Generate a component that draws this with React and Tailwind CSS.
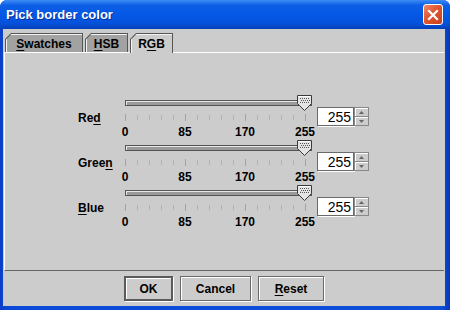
import React from "react";

const rows = [
  { name: "Red", key: "d", idx: 2 },
  { name: "Green", key: "n", idx: 4 },
  { name: "Blue", key: "B", idx: 0 },
];

function Mnemonic({ text, idx }) {
  return (
    <>
      {text.slice(0, idx)}
      <span className="underline underline-offset-2">{text[idx]}</span>
      {text.slice(idx + 1)}
    </>
  );
}

function Thumb() {
  const dots = [];
  for (let y = 3; y <= 8; y += 2) {
    for (let x = 3; x <= 12; x += 2) {
      dots.push(<rect key={`${x}-${y}`} x={x + ((y - 3) / 2) % 2} y={y} width="1" height="1" fill="#555" />);
    }
  }
  return (
    <svg width="15" height="16" viewBox="0 0 15 16">
      <path d="M0.5 0.5 H14.5 V8.5 L7.5 15.5 L0.5 8.5 Z" fill="#e4e4e4" stroke="#3a3a3a" />
      <path d="M1.5 1.5 H13.5" stroke="#fff" />
      {dots}
    </svg>
  );
}

function Spinner() {
  return (
    <div className="flex mt-[12px] h-[19px]">
      <div className="w-[37px] h-full bg-white border border-[#6a6a6a] shadow-[1px_1px_0_#fff] flex items-center justify-end pr-[2px] text-[14px] text-black leading-none">
        255
      </div>
      <div className="flex flex-col w-[15px] h-full">
        <div className="flex-1 bg-[#cccccc] border border-[#888] border-b-0 shadow-[inset_1px_1px_0_#fff] flex items-center justify-center">
          <svg width="5" height="3" viewBox="0 0 5 3"><path d="M2.5 0 L5 3 H0 Z" fill="#666" /></svg>
        </div>
        <div className="flex-1 bg-[#cccccc] border border-[#888] shadow-[inset_1px_1px_0_#fff] flex items-center justify-center">
          <svg width="5" height="3" viewBox="0 0 5 3"><path d="M0 0 H5 L2.5 3 Z" fill="#666" /></svg>
        </div>
      </div>
    </div>
  );
}

function SliderRow({ row }) {
  const ticks = Array.from({ length: 16 }, (_, i) => i);
  return (
    <div className="flex h-[45px]">
      <div className="w-[117px] pl-[73px] pt-[16px] text-[12px] font-bold leading-[14px] text-black">
        <Mnemonic text={row.name} idx={row.idx} />
      </div>
      <div className="relative w-[191px] h-full">
        <div className="pt-[5px] pl-[3px]">
          <div className="w-[187px] h-[6px] border border-[#555] bg-[#9a9a9a] shadow-[inset_1px_1px_0_#e8e8e8]" />
        </div>
        <div className="flex justify-between items-start w-[181px] ml-[3px] mt-[8px] h-[7px]">
          {ticks.map((i) => (
            <div
              key={i}
              className={i % 5 === 0 ? "w-px h-[7px] bg-[#a0a0bc]" : "w-px h-[5px] mt-[1px] bg-[#b0b0c4]"}
            />
          ))}
        </div>
        <div className="flex justify-between w-[220px] -ml-[17px] mt-[4px] text-[12px] font-bold leading-[14px] text-black">
          {["0", "85", "170", "255"].map((n) => (
            <div key={n} className="w-[40px] text-center">{n}</div>
          ))}
        </div>
        <div className="absolute left-[175px] top-0">
          <Thumb />
        </div>
      </div>
      <div className="ml-[4px]">
        <Spinner />
      </div>
    </div>
  );
}

function Tab({ label, idx, width, selected }) {
  return (
    <div
      className={`${width} ${selected ? "h-[20px] -mb-px z-10" : "h-[19px]"} relative bg-[#555] pt-px px-px [clip-path:polygon(6px_0,100%_0,100%_100%,0_100%,0_6px)]`}
    >
      <div
        className={`h-full ${selected ? "bg-[#cccccc]" : "bg-[#a2a2a2]"} shadow-[inset_1px_1px_0_#f4f4f4] [clip-path:polygon(5.5px_0,100%_0,100%_100%,0_100%,0_5.5px)] flex items-center justify-center text-[12px] font-bold leading-none text-black pt-px`}
      >
        <Mnemonic text={label} idx={idx} />
      </div>
    </div>
  );
}

function Button({ label, idx, width, isDefault }) {
  return (
    <button
      className={`${width} h-[25px] bg-[#cccccc] ${isDefault ? "border-2 border-[#5a5a5a]" : "border border-[#6a6a6a]"} shadow-[inset_1px_1px_0_#fff,1px_1px_0_#fff] text-[12px] font-bold text-black leading-none`}
    >
      {idx === undefined ? label : <Mnemonic text={label} idx={idx} />}
    </button>
  );
}

export default function App() {
  return (
    <div className="w-[450px] h-[310px] bg-white font-['Liberation_Sans',Arial,sans-serif]">
      <div className="flex flex-col h-full rounded-t-[7px] bg-[linear-gradient(to_right,#0a3fc4,#0b4ad8_2%,#0c4fd9_98%,#0937b8)]">
        {/* title bar */}
        <div className="h-[29px] flex items-center justify-between pl-[6px] pr-[7px] rounded-t-[7px] bg-[linear-gradient(to_bottom,#3e8cf6_0%,#0d5fe6_18%,#0558e5_50%,#0552dc_80%,#0240b8_100%)]">
          <span className="text-[13px] font-bold text-white leading-none [text-shadow:1px_1px_0_#0a2f9a]">Pick border color</span>
          <div className="w-[20px] h-[21px] rounded-[3px] border border-white bg-[linear-gradient(135deg,#ee8a6e,#e1552f_45%,#c8401d)] flex items-center justify-center">
            <svg width="12" height="12" viewBox="0 0 12 12">
              <path d="M2 2 L10 10 M10 2 L2 10" stroke="#fff" strokeWidth="2.2" strokeLinecap="square" />
            </svg>
          </div>
        </div>

        {/* client area */}
        <div className="flex-1 ml-[3px] mr-[5px] mb-[4px] bg-[#cccccc] flex flex-col">
          <div className="flex items-end gap-[2px] pl-[2px] pt-[4px] h-[23px]">
            <Tab label="Swatches" idx={0} width="w-[78px]" />
            <Tab label="HSB" idx={0} width="w-[43px]" />
            <Tab label="RGB" idx={1} width="w-[43px]" selected />
          </div>
          <div className="mx-[1px] h-[219px] border-t border-l border-t-white border-l-white border-b border-b-[#666] pt-[42px]">
            {rows.map((row) => (
              <SliderRow key={row.name} row={row} />
            ))}
          </div>
          <div className="flex justify-center gap-[7px] pt-[5px]">
            <Button label="OK" width="w-[49px]" isDefault />
            <Button label="Cancel" width="w-[71px]" />
            <Button label="Reset" idx={0} width="w-[66px]" />
          </div>
        </div>
      </div>
    </div>
  );
}
